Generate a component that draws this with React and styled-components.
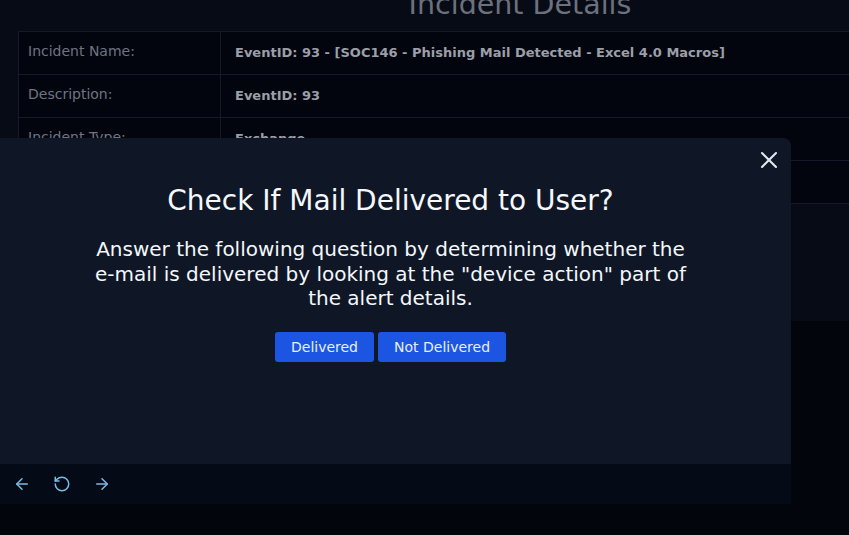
import React from "react";
import styled, { createGlobalStyle } from "styled-components";
import { ArrowLeft, ArrowRight, RotateCcw, X } from "lucide-react";

const Global = createGlobalStyle`
  html, body { margin: 0; padding: 0; background: #03050d; overflow: hidden; }
  body { font-family: "DejaVu Sans", "Open Sans", sans-serif; }
  * { box-sizing: border-box; }
`;

const Page = styled.div`
  position: relative;
  width: 849px;
  height: 535px;
  overflow: hidden;
  background: #03050d;
`;

const Details = styled.section`
  width: 1040px;
  background: #070b15;
  padding: 0 0 117px 18px;
`;

const Heading = styled.h2`
  margin: -13px 0 0 0;
  height: 44px;
  padding-right: 18px;
  text-align: center;
  font-size: 28.5px;
  font-weight: 400;
  line-height: 36px;
  color: #6b717d;
`;

const Table = styled.div`
  display: grid;
  grid-template-columns: 202px 1fr;
  border-top: 1px solid #141a27;
  border-left: 1px solid #141a27;
`;

const Cell = styled.div`
  height: 43px;
  background: #03050e;
  border-right: 1px solid #141a27;
  border-bottom: 1px solid #141a27;
  padding: ${(p) => (p.$value ? "13px 14px" : "11px 9px")};
  font-size: ${(p) => (p.$value ? "13px" : "14px")};
  font-weight: ${(p) => (p.$value ? 700 : 400)};
  color: ${(p) => (p.$value ? "#9b9fa8" : "#6e7482")};
  white-space: nowrap;
`;

const Modal = styled.div`
  position: absolute;
  left: -10px;
  top: 138px;
  width: 801px;
  height: 366px;
  background: #0f1727;
  border-radius: 8px 8px 0 0;
  display: flex;
  flex-direction: column;
`;

const CloseButton = styled.button`
  position: absolute;
  top: 8px;
  right: 8px;
  width: 28px;
  height: 28px;
  padding: 0;
  border: none;
  background: transparent;
  color: #e3e6ec;
  display: flex;
  align-items: center;
  justify-content: center;
  cursor: pointer;
`;

const Body = styled.div`
  flex: 1;
  display: flex;
  flex-direction: column;
  align-items: center;
  padding-top: 45px;
  color: #f5f7fa;
`;

const Title = styled.h1`
  margin: 0;
  font-size: 28px;
  font-weight: 400;
  line-height: 36px;
`;

const Text = styled.p`
  margin: 18px 0 0 0;
  width: 610px;
  text-align: center;
  font-size: 20px;
  line-height: 24.5px;
`;

const Actions = styled.div`
  display: flex;
  gap: 4px;
  margin-top: 21px;
`;

const Button = styled.button`
  height: 30px;
  padding: 0 16px;
  border: none;
  border-radius: 3px;
  background: #1c55e2;
  color: #e8eefc;
  font-family: inherit;
  font-size: 14px;
  cursor: pointer;
`;

const Footer = styled.div`
  height: 40px;
  background: #050b16;
  display: flex;
  align-items: center;
  gap: 22px;
  padding-left: 23px;
  color: #7dbbe4;
`;

const rows = [
  ["Incident Name:", "EventID: 93 - [SOC146 - Phishing Mail Detected - Excel 4.0 Macros]"],
  ["Description:", "EventID: 93"],
  ["Incident Type:", "Exchange"],
  ["", ""],
];

export default function App() {
  return (
    <Page>
      <Global />
      <Details>
        <Heading>Incident Details</Heading>
        <Table>
          {rows.map(([k, v], i) => (
            <React.Fragment key={i}>
              <Cell>{k}</Cell>
              <Cell $value>{v}</Cell>
            </React.Fragment>
          ))}
        </Table>
      </Details>
      <Modal>
        <CloseButton aria-label="Close">
          <X size={28} strokeWidth={1.8} />
        </CloseButton>
        <Body>
          <Title>Check If Mail Delivered to User?</Title>
          <Text>
            Answer the following question by determining whether the e-mail is delivered by
            looking at the "device action" part of the alert details.
          </Text>
          <Actions>
            <Button>Delivered</Button>
            <Button>Not Delivered</Button>
          </Actions>
        </Body>
        <Footer>
          <ArrowLeft size={18} strokeWidth={2} />
          <RotateCcw size={18} strokeWidth={2} />
          <ArrowRight size={18} strokeWidth={2} />
        </Footer>
      </Modal>
    </Page>
  );
}
